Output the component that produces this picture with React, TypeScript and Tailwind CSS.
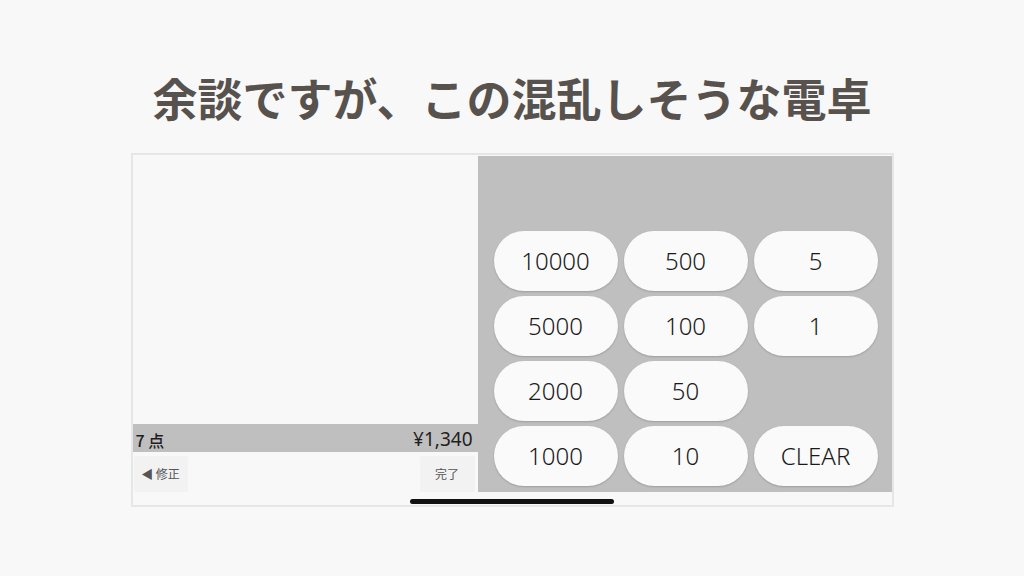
import React from "react";

const keys: (string | null)[] = ["10000", "500", "5", "5000", "100", "1", "2000", "50", null, "1000", "10", "CLEAR"];

export default function App() {
  return (
    <div
      className="relative w-[1024px] h-[576px] bg-[#f8f8f8] flex flex-col items-center overflow-hidden"
      style={{ fontFamily: '"Noto Sans CJK JP", "Noto Sans", sans-serif' }}
    >
      <div className="mt-[75px] h-[45px] leading-[45px] text-[45px] font-bold text-[#57524d]">
        余談ですが、この混乱しそうな電卓
      </div>
      <div className="mt-[33px] w-[763px] h-[354px] border-2 border-[#e6e6e6] bg-[#f8f8f8] flex flex-col pt-[1px]">
        <div className="flex h-[336px]">
          <div className="w-[345px] flex flex-col">
            <div className="flex-1" />
            <div className="h-[28px] bg-[#bfbfbf] flex items-center justify-between pl-[3px] pr-[5px] pt-[3px] text-[#1e1e1e]">
              <span className="text-[16px] font-medium leading-none">7 点</span>
              <span className="text-[19px] font-normal leading-none" style={{ fontFamily: '"Noto Sans", sans-serif' }}>
                ¥1,340
              </span>
            </div>
            <div className="h-[40px] flex justify-between items-end pl-[1px] pr-[3px]">
              <div className="w-[54px] h-[36px] bg-[#f2f2f2] rounded-[3px] flex items-center justify-center text-[12px] text-[#555]">
                ◀ 修正
              </div>
              <div className="w-[55px] h-[36px] bg-[#f2f2f2] rounded-[3px] flex items-center justify-center text-[12px] text-[#555]">
                完了
              </div>
            </div>
          </div>
          <div className="w-[414px] bg-[#bfbfbf] flex flex-col justify-end pl-[16px] pb-[6px]">
            <div className="grid grid-cols-[124px_124px_124px] auto-rows-[60px] gap-x-[6px] gap-y-[5px]">
              {keys.map((k, i) =>
                k ? (
                  <div
                    key={i}
                    className="rounded-full bg-[#fafafa] shadow-[0_1px_2px_rgba(0,0,0,0.18)] flex items-center justify-center text-[24px] font-light text-[#1a1a1a]"
                    style={{ fontFamily: '"Noto Sans", sans-serif' }}
                  >
                    {k}
                  </div>
                ) : (
                  <div key={i} />
                )
              )}
            </div>
          </div>
        </div>
      </div>
      <div className="absolute left-[410px] top-[499px] w-[204px] h-[5px] rounded-full bg-[#111]" />
    </div>
  );
}
